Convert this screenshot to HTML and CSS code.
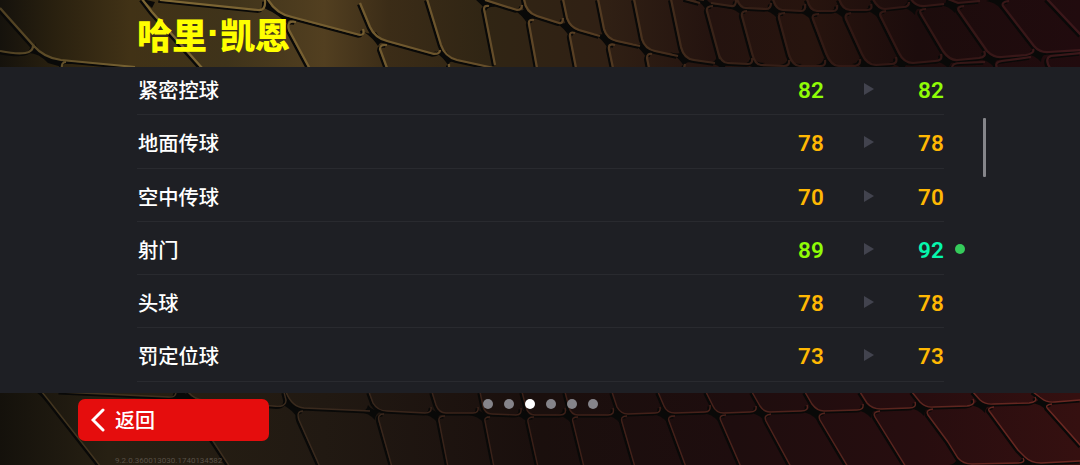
FILE: index.html
```html
<!DOCTYPE html>
<html lang="zh-CN">
<head>
    <meta charset="UTF-8">
    <meta name="viewport" content="width=device-width, initial-scale=1.0">
    <title>哈里·凯恩</title>
    <link rel="stylesheet" href="styles.css">
</head>
<body>
    <svg class="fondo" viewBox="0 0 1080 465" aria-hidden="true">
        <defs>
            <linearGradient id="topFill" gradientUnits="userSpaceOnUse" x1="0" y1="0" x2="1080" y2="0">
                <stop offset="0" stop-color="#15120c"/>
                <stop offset=".05" stop-color="#29200f"/>
                <stop offset=".12" stop-color="#413216"/>
                <stop offset=".21" stop-color="#3f331a"/>
                <stop offset=".3" stop-color="#523f20"/>
                <stop offset=".36" stop-color="#3b2c17"/>
                <stop offset=".45" stop-color="#302514"/>
                <stop offset=".56" stop-color="#302014"/>
                <stop offset=".66" stop-color="#24130f"/>
                <stop offset=".75" stop-color="#27140e"/>
                <stop offset=".85" stop-color="#1c0c0c"/>
                <stop offset="1" stop-color="#210b0e"/>
            </linearGradient>
            <linearGradient id="topEdge" gradientUnits="userSpaceOnUse" x1="0" y1="0" x2="1080" y2="0">
                <stop offset="0" stop-color="#4f4022"/>
                <stop offset=".15" stop-color="#806935"/>
                <stop offset=".4" stop-color="#6d562d"/>
                <stop offset=".55" stop-color="#553c22"/>
                <stop offset=".66" stop-color="#392318"/>
                <stop offset=".8" stop-color="#301713"/>
                <stop offset="1" stop-color="#3c171a"/>
            </linearGradient>
            <linearGradient id="botFill" gradientUnits="userSpaceOnUse" x1="0" y1="0" x2="1080" y2="0">
                <stop offset="0" stop-color="#14110b"/>
                <stop offset=".1" stop-color="#272013"/>
                <stop offset=".3" stop-color="#211912"/>
                <stop offset=".5" stop-color="#1a0f0d"/>
                <stop offset=".68" stop-color="#1e0d0e"/>
                <stop offset=".85" stop-color="#270d0f"/>
                <stop offset="1" stop-color="#351010"/>
            </linearGradient>
            <linearGradient id="botEdge" gradientUnits="userSpaceOnUse" x1="0" y1="0" x2="1080" y2="0">
                <stop offset="0" stop-color="#44371f"/>
                <stop offset=".3" stop-color="#39291d"/>
                <stop offset=".5" stop-color="#3a1f17"/>
                <stop offset=".7" stop-color="#4c221b"/>
                <stop offset="1" stop-color="#6c2822"/>
            </linearGradient>
            <path id="star" d="M-12 -6Q-4 -3 0 -6Q3 0 12 4Q4 3 2 8Q-3 0 -12 -6Z"/>
            <path id="starFlat" d="M-11 0Q-4 -1 -3 -7Q1 -1 11 -1Q4 1 4 8Q-2 1 -11 0Z"/>
            <path id="topLines" d="M0 8L33 45Q44 58 61 60L135 67M0 51Q34 58 33 45M62 69Q61 62 66 62
                M142 -1L152 12L203 69M160 0L258 10Q266 11 265 0M267 -2Q276 14 292 17L360 35Q365 35 363 29
                M310 69L289 30Q286 20 296 22M360 3L370 27Q375 38 387 41L434 54Q440 54 440 50
                M427 -1L441 45Q445 57 457 60L494 68M387 68L380 49Q380 44 387 45M449 68L449 64
                M485 0L517 10Q522 10 522 5M524 -2Q525 12 537 16L559 23Q563 24 563 18
                M495 65L484 9Q484 5 489 6M537 68L529 24Q528 19 534 20M563 -1L567 18Q570 27 579 30L600 36
                M576 68L570 37Q569 31 575 33M598 -1L604 29Q607 39 617 41L640 46
                M613 68L609 49Q608 43 615 45M634 -1L642 39Q645 49 655 51L678 56M649 68L647 58Q647 53 652 54
                M671 -1L681 47Q684 59 694 60L715 63M684 68L685 64M685 -1L700 3M720 59L707 11Q706 6 713 6
                M698 -1L704 0M711 3L731 6Q736 7 736 0M737 -1Q740 8 746 8L766 9Q771 9 771 3
                M773 -1Q776 10 783 10L801 11Q806 11 805 4M807 -1Q810 11 817 11L833 11Q838 11 837 5
                M839 -1Q843 10 850 10L867 10Q873 10 871 4M873 -1Q878 9 885 9L903 7Q909 7 909 2
                M911 -1Q916 7 925 6L944 4M948 -1L958 3L980 1
                M718 52Q721 63 728 63L748 64Q753 64 752 58M752 53L742 16Q741 11 747 11
                M752 53Q755 65 761 65L784 66Q790 66 789 60M789 55L779 18Q778 13 785 13
                M789 55Q793 66 800 66L821 66Q826 66 825 60M826 53L813 19Q811 14 819 14
                M826 53Q831 66 839 66L855 66Q861 65 860 59M862 54L846 19Q844 14 851 13
                M862 54Q867 65 876 65L891 64Q898 64 896 57M899 53L881 17Q878 12 886 11
                M899 53Q904 63 913 63L935 61Q943 61 941 54M943 51L921 14Q918 9 926 9
                M943 51Q950 61 958 60L979 58Q987 57 984 51M987 51L959 11Q956 7 964 6
                M987 51Q994 58 1002 57L1026 55Q1035 53 1033 49M1034 46L1003 6Q1001 2 1009 1
                M1034 46Q1040 53 1049 52L1081 50M1047 -1L1081 35M1050 68Q1044 58 1051 56L1081 53
                M997 68Q994 62 1002 61L1031 57M952 68Q952 63 960 63L985 62"/>
            <path id="botLines" d="M42 392L50 402L101 467M60 392L168 397Q176 398 176 392
                M188 392Q195 400 204 400L273 406Q286 408 286 400L284 392M211 438L230 467
                M286 392Q292 407 304 408L370 411M320 467L299 420Q296 411 303 411
                M369 392L373 403Q378 411 387 411L425 413Q432 413 431 407
                M432 392L436 405Q439 413 446 413L473 413Q479 413 478 407
                M480 392L483 406Q485 414 492 414L516 415Q522 415 521 408
                M522 392L526 407Q528 415 535 415L560 415Q567 415 565 408
                M565 392L569 407Q571 415 578 415L608 415Q615 415 613 408
                M612 392L617 407Q621 414 628 414L655 413Q661 413 660 407
                M658 392L664 406Q667 413 675 413L705 412Q711 412 710 405
                M706 392L713 406Q716 413 724 413L750 412Q757 412 756 406
                M752 392L760 406Q764 412 770 412L801 411Q809 411 807 405
                M805 392L812 404Q817 411 824 411L857 410Q864 410 863 404
                M860 392L867 403Q872 409 881 409L909 408Q917 408 915 402
                M912 392L920 402Q926 408 934 407L967 406Q976 405 973 399
                M973 392L980 400Q986 405 994 404L1029 403Q1038 402 1035 397
                M1033 392L1041 398Q1047 403 1055 402L1081 400
                M392 467L379 421Q377 414 384 414M448 467L439 421Q438 416 445 416M494 467L485 421Q484 417 490 417
                M538 467L528 422Q527 417 534 417M584 467L573 422Q571 417 578 417M635 467L622 422Q620 416 627 416
                M686 467L669 421Q667 416 675 416M741 467L721 421Q718 415 726 415M791 467L766 421Q763 415 771 414
                M848 467L820 420Q817 414 825 413M906 467L875 417Q872 412 880 411M948 442L928 415Q925 410 933 409
                M948 442L958 458Q963 464 972 464L1018 463Q1026 463 1023 458
                M1018 450L990 412Q986 408 994 407M1018 450L1025 457Q1031 463 1041 463L1081 461
                M1081 446L1048 409Q1044 405 1052 404"/>
        </defs>
        <g class="lineas">
            <rect width="1080" height="70" fill="url(#topFill)"/>
            <use href="#topLines" class="sombra" x="-1.8" y="1.6"/>
            <path class="hueco" d="M35 43Q40 57 65 61L62 67L48 63Q38 52 27 53Q36 51 35 43ZM142 -1L155 2L152 8Z"/>
            <path class="hueco" d="M264 8L266 0Q276 17 294 19Q286 20 288 25Q280 15 264 8Z"/>
            <use href="#star" x="376" y="38"/><use href="#star" x="446" y="57"/>
            <use href="#star" x="484" y="3"/><use href="#star" x="525" y="15"/>
            <use href="#star" x="567" y="28"/><use href="#star" x="605" y="39"/>
            <use href="#star" x="644" y="49"/><use href="#star" x="682" y="58"/>
            <use href="#star" x="705" y="3"/>
            <use href="#starFlat" x="738" y="8"/><use href="#starFlat" x="773" y="10"/>
            <use href="#starFlat" x="807" y="12"/><use href="#starFlat" x="840" y="11"/>
            <use href="#starFlat" x="874" y="10"/><use href="#starFlat" x="911" y="7"/>
            <use href="#starFlat" x="951" y="5"/><use href="#starFlat" x="997" y="1"/>
            <use href="#starFlat" x="720" y="63"/><use href="#starFlat" x="754" y="64"/>
            <use href="#starFlat" x="791" y="65"/><use href="#starFlat" x="827" y="65"/>
            <use href="#starFlat" x="863" y="64"/><use href="#starFlat" x="900" y="63"/>
            <use href="#starFlat" x="945" y="61"/><use href="#starFlat" x="990" y="59"/>
            <use href="#starFlat" x="1037" y="54"/>
            <use href="#topLines" stroke="url(#topEdge)" stroke-width="2.2"/>
        </g>
        <g class="lineas">
            <rect y="390" width="1080" height="75" fill="url(#botFill)"/>
            <use href="#botLines" class="sombra" x="-1.5" y="1.3"/>
            <path class="hueco" d="M36 392H43L52 405ZM170 399L178 392H184Q190 399 200 402ZM283 405L287 400Q293 409 306 410Q297 411 299 420Q292 409 283 405Z"/>
            <use href="#starFlat" x="371" y="412"/><use href="#starFlat" x="433" y="414"/>
            <use href="#starFlat" x="480" y="415"/><use href="#starFlat" x="524" y="415"/>
            <use href="#starFlat" x="567" y="415"/><use href="#starFlat" x="616" y="415"/>
            <use href="#starFlat" x="663" y="414"/><use href="#starFlat" x="714" y="413"/>
            <use href="#starFlat" x="761" y="413"/><use href="#starFlat" x="813" y="412"/>
            <use href="#starFlat" x="867" y="410"/><use href="#starFlat" x="920" y="408"/>
            <use href="#starFlat" x="981" y="405"/><use href="#starFlat" x="1043" y="403"/>
            <use href="#starFlat" x="1026" y="463"/><use href="#starFlat" x="960" y="465"/>
            <use href="#botLines" stroke="url(#botEdge)" stroke-width="1.4"/>
        </g>
    </svg>

    <div class="pantalla">
        <header class="cabecera">
            <h1>哈里<span class="punto">·</span>凯恩</h1>
        </header>

        <main class="panel">
            <div class="lista">
                <div class="fila">
                    <span class="nombre">紧密控球</span>
                    <span class="valor verde">82</span>
                    <span class="flecha"></span>
                    <span class="valor verde">82</span>
                </div>
                <div class="fila">
                    <span class="nombre">地面传球</span>
                    <span class="valor naranja">78</span>
                    <span class="flecha"></span>
                    <span class="valor naranja">78</span>
                </div>
                <div class="fila">
                    <span class="nombre">空中传球</span>
                    <span class="valor naranja">70</span>
                    <span class="flecha"></span>
                    <span class="valor naranja">70</span>
                </div>
                <div class="fila">
                    <span class="nombre">射门</span>
                    <span class="valor verde">89</span>
                    <span class="flecha"></span>
                    <span class="valor turquesa">92</span>
                    <span class="mejora"></span>
                </div>
                <div class="fila">
                    <span class="nombre">头球</span>
                    <span class="valor naranja">78</span>
                    <span class="flecha"></span>
                    <span class="valor naranja">78</span>
                </div>
                <div class="fila">
                    <span class="nombre">罚定位球</span>
                    <span class="valor naranja">73</span>
                    <span class="flecha"></span>
                    <span class="valor naranja">73</span>
                </div>
            </div>
            <div class="scroll"></div>
        </main>

        <footer class="pie">
            <div class="izquierda">
                <button type="button" class="volver">
                    <svg width="14" height="24" viewBox="0 0 14 24"><path d="M12 2L2 12L12 22"/></svg>
                    返回
                </button>
                <div class="version">9.2.0.360013030.1740134582</div>
            </div>
            <nav class="puntos">
                <i></i><i></i><i class="activo"></i><i></i><i></i><i></i>
            </nav>
        </footer>
    </div>
</body>
</html>
```
FILE: styles.css
```css
* {
    box-sizing: border-box;
}
body {
    margin: 0;
    background: #0c0b0a;
    color: #fff;
    font-family: "Noto Sans CJK SC", sans-serif;
    overflow: hidden;
}

/* fondo de placas */
.fondo {
    position: absolute;
    top: 0;
    left: 0;
    width: 1080px;
    height: 465px;
}
.lineas {
    fill: #090908;
}
#topLines, #botLines {
    fill: none;
}
.sombra {
    stroke: #090908;
    stroke-width: 2.4;
}
.hueco {
    fill: #090908;
}

.pantalla {
    position: relative;
    width: 1080px;
    height: 465px;
    display: flex;
    flex-direction: column;
}

.cabecera {
    height: 67px;
    padding: 8px 0 0 137px;
}
h1 {
    margin: 0;
    font-size: 35px;
    line-height: 52px;
    font-weight: 900;
    color: #ffff00;
    display: flex;
}
.punto {
    width: 13px;
    font-family: "Liberation Sans", sans-serif;
    font-size: 40px;
    line-height: 50px;
    text-align: center;
}

.panel {
    height: 326px;
    background: #1e1f24;
    display: flex;
    padding-left: 137px;
    overflow: hidden;
}
.lista {
    width: 807px;
    margin-top: -5px;
}
.fila {
    height: 53.25px;
    border-bottom: 1px solid #292a2f;
    display: grid;
    grid-template-columns: 1fr 60px 60px 60px;
    align-items: center;
    padding-top: 2px;
    position: relative;
}
.nombre {
    font-size: 20.3px;
    font-weight: 500;
    line-height: 30px;
    padding-left: 1px;
}
.valor {
    font-family: Roboto, sans-serif;
    font-size: 22.5px;
    font-weight: 600;
    line-height: 30px;
    letter-spacing: 0.2px;
    text-align: right;
    padding-top: 2px;
}
.verde {
    color: #90fc06;
}
.naranja {
    color: #ffb803;
}
.turquesa {
    color: #06f7ae;
}
.flecha {
    border-left: 10px solid #42434e;
    border-top: 6px solid transparent;
    border-bottom: 6px solid transparent;
    justify-self: end;
    margin-right: 10px;
}
.mejora {
    position: absolute;
    right: -21px;
    top: 22px;
    width: 10px;
    height: 10px;
    border-radius: 50%;
    background: #35cb5b;
}
.scroll {
    width: 3px;
    height: 59px;
    margin: 51px 0 0 39px;
    background: #85858a;
    border-radius: 1px;
}

.pie {
    height: 72px;
    display: flex;
    padding: 6px 0 0 78px;
}
.izquierda {
    width: 405px;
}
.volver {
    width: 191px;
    height: 42px;
    border: 0;
    border-radius: 7px;
    background: #e50d0d;
    color: #fff;
    font-family: inherit;
    font-size: 20px;
    font-weight: 500;
    line-height: 30px;
    display: flex;
    align-items: center;
    gap: 10px;
    padding: 0 0 0 13px;
}
.volver svg {
    fill: none;
    stroke: #fff;
    stroke-width: 3;
    stroke-linecap: round;
}
.version {
    margin: 14px 0 0 37px;
    font-family: Roboto, sans-serif;
    font-size: 8px;
    line-height: 12px;
    color: #574f45;
}
.puntos {
    display: flex;
    gap: 11px;
}
.puntos i {
    width: 10px;
    height: 10px;
    border-radius: 50%;
    background: #85848a;
}
.puntos .activo {
    background: #fff;
}
```
